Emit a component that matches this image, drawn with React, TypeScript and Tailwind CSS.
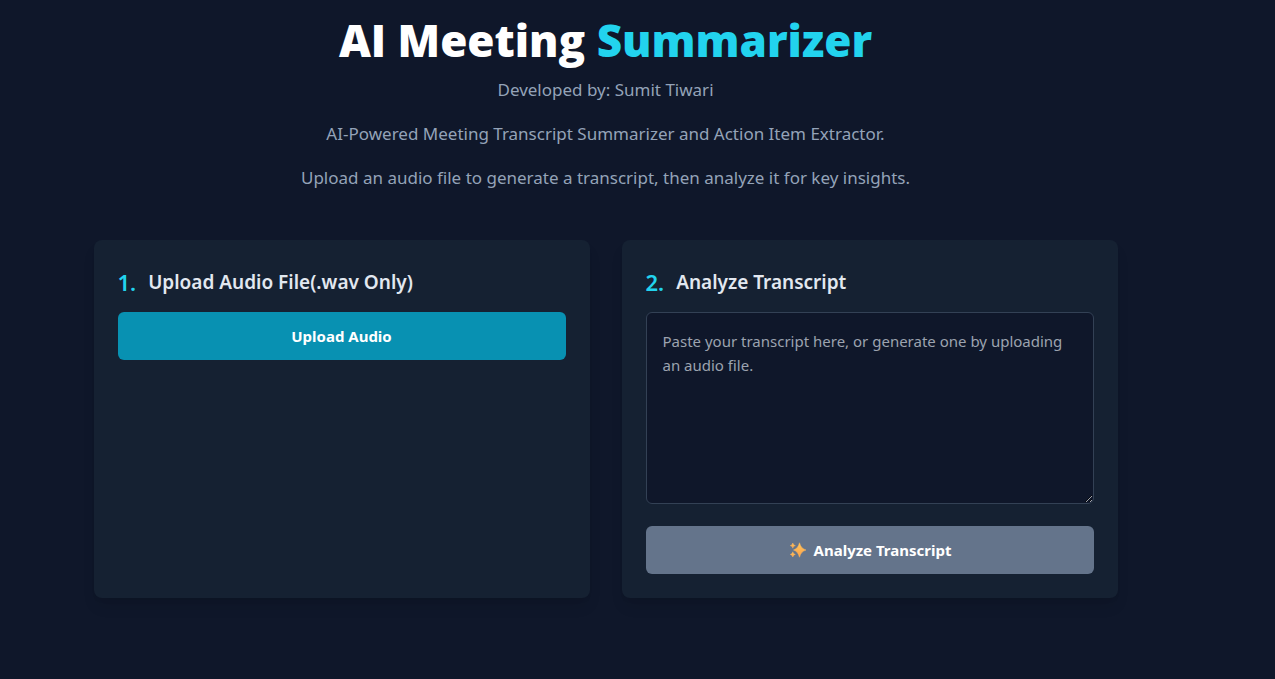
import { useState } from 'react';

function Sparkles() {
  return (
    <svg className="h-5 w-5 shrink-0" viewBox="0 0 20 20" aria-hidden="true">
      <defs>
        <linearGradient id="spark" x1="0" y1="0" x2="0" y2="1">
          <stop offset="0" stopColor="#ffc95c" />
          <stop offset="1" stopColor="#ff9f4a" />
        </linearGradient>
      </defs>
      <g fill="url(#spark)" stroke="#ffb65a" strokeWidth="0.5" strokeLinejoin="round">
        <path d="M11.5 2.8C12.8 7 14.2 8.7 18 10C14.2 11.3 12.8 13 11.5 17.2C10.2 13 8.9 11.3 5.5 10C8.9 8.7 10.2 7 11.5 2.8Z" />
        <path d="M4.8 3C5.3 4.6 5.8 5.1 7.3 5.6C5.8 6.1 5.3 6.6 4.8 8.2C4.3 6.6 3.8 6.1 2.3 5.6C3.8 5.1 4.3 4.6 4.8 3Z" />
        <path d="M4.8 11.8C5.3 13.4 5.8 13.9 7.3 14.4C5.8 14.9 5.3 15.4 4.8 17C4.3 15.4 3.8 14.9 2.3 14.4C3.8 13.9 4.3 13.4 4.8 11.8Z" />
      </g>
    </svg>
  );
}

export default function App() {
  const [transcript, setTranscript] = useState('');
  return (
    <div className="min-h-screen bg-[#0f172a] pr-16 font-['Noto_Sans',sans-serif] text-[#e2e8f0]">
      <div className="mx-auto max-w-5xl pt-3">
        <header className="mb-12 text-center text-[17px] leading-7 text-[#94a3b8]">
          <h1 className="font-['Open_Sans',sans-serif] text-[44px] leading-14 font-extrabold text-white">
            AI Meeting <span className="text-[#22d3ee]">Summarizer</span>
          </h1>
          <p className="mt-2">Developed by: Sumit Tiwari</p>
          <p className="mt-4">AI-Powered Meeting Transcript Summarizer and Action Item Extractor.</p>
          <p className="mt-4">Upload an audio file to generate a transcript, then analyze it for key insights.</p>
        </header>
        <main className="grid grid-cols-2 gap-8">
          <section className="rounded-lg bg-[#152132] p-6 shadow-lg">
            <h2 className="mb-3 flex items-center text-[19px] leading-9 font-semibold">
              <span className="mr-3 text-[22px] text-[#22d3ee]">1.</span>Upload Audio File(.wav Only)
            </h2>
            <button className="h-12 w-full rounded-md bg-[#0891b2] text-[15px] font-bold text-white">Upload Audio</button>
          </section>
          <section className="rounded-lg bg-[#152132] p-6 shadow-lg">
            <h2 className="mb-3 flex items-center text-[19px] leading-9 font-semibold">
              <span className="mr-3 text-[22px] text-[#22d3ee]">2.</span>Analyze Transcript
            </h2>
            <textarea
              aria-label="Transcript"
              value={transcript}
              onChange={(e) => setTranscript(e.target.value)}
              placeholder="Paste your transcript here, or generate one by uploading an audio file."
              className="block h-48 w-full rounded-md border border-[#334155] bg-[#0f172a] p-4 text-[15px] leading-6 placeholder:text-[#9ca3af]"
            />
            <button className="mt-[22px] flex h-12 w-full items-center justify-center gap-1.5 rounded-md bg-[#64748b] text-[15px] font-bold text-white">
              <Sparkles />Analyze Transcript
            </button>
          </section>
        </main>
      </div>
    </div>
  );
}
